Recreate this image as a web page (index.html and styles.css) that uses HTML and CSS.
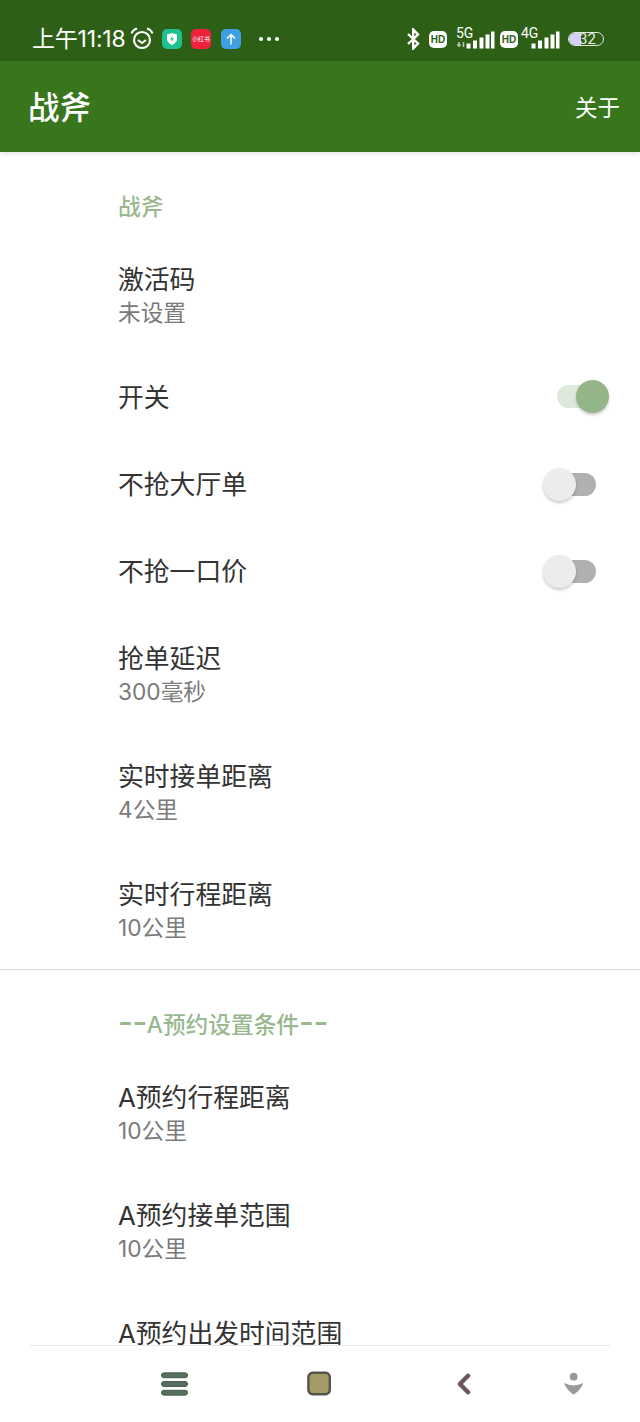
FILE: index.html
```html
<!DOCTYPE html>
<html lang="zh-CN">
<head>
<meta charset="utf-8">
<title>战斧</title>
<link rel="stylesheet" href="styles.css">
</head>
<body>
<div class="phone">
  <header class="top">
    <div class="status">
      <span class="time">上午11:18</span>
      <svg class="alarm" viewBox="0 0 24 24" width="24" height="24"><circle cx="12" cy="13" r="8" fill="none" stroke="#fff" stroke-width="2.2"/><path d="M8 13l4 3 4-3" fill="none" stroke="#fff" stroke-width="2"/><path d="M1.500 6.500Q3 2.500 7 1.500M22.500 6.500Q21 2.500 17 1.500" fill="none" stroke="#fff" stroke-width="2"/></svg>
      <span class="app app-green"><svg viewBox="0 0 20 20" width="20" height="20"><path d="M10 4l5 1.500v4.500q0 3.500-5 6-5-2.500-5-6V5.500z" fill="#fff"/><path d="M10.500 6.500L8 10.500h2l-.5 3 2.500-4h-2z" fill="#1fbf8f"/></svg></span>
      <span class="app app-red">小红书</span>
      <span class="app app-blue"><svg viewBox="0 0 20 20" width="20" height="20"><path d="M10 15.500V6M6 9.500L10 5.500l4 4" fill="none" stroke="#fff" stroke-width="1.500"/></svg></span>
      <span class="dots"><i></i><i></i><i></i></span>
      <span class="status-right">
        <svg class="bt" viewBox="0 0 15 22" width="15" height="22"><path d="M2 6l10 9.500-4.800 5V1.500l4.800 5L2 16" fill="none" stroke="#fff" stroke-width="2.400"/></svg>
        <span class="hd">HD</span>
        <span class="net net-5g">
          <span class="net-label">5G</span>
          <svg viewBox="0 0 39 18" width="39" height="18"><path d="M1 14h4M7.500 11v5M3 11v5" stroke="#b8cdb0" stroke-width="1.500"/><rect x="10.500" y="12.500" width="4" height="5" fill="#fff"/><rect x="17" y="9.500" width="4" height="8" fill="#fff"/><rect x="23.500" y="6.500" width="4" height="11" fill="#fff"/><rect x="29.500" y="3.500" width="4" height="14" fill="#fff"/><rect x="35" y="0.500" width="3.500" height="17" fill="#fff"/></svg>
        </span>
        <span class="hd hd-second">HD</span>
        <span class="net net-4g">
          <span class="net-label">4G</span>
          <svg viewBox="0 0 39 18" width="39" height="18"><rect x="10.500" y="12.500" width="4" height="5" fill="#fff"/><rect x="17" y="9.500" width="4" height="8" fill="#fff"/><rect x="23.500" y="6.500" width="4" height="11" fill="#fff"/><rect x="29.500" y="3.500" width="4" height="14" fill="#fff"/><rect x="35" y="0.500" width="3.500" height="17" fill="#fff"/></svg>
        </span>
        <span class="battery"><span class="battery-fill"></span><span class="battery-num">32</span></span>
      </span>
    </div>
    <div class="appbar">
      <h1 class="appbar-title">战斧</h1>
      <span class="appbar-action">关于</span>
    </div>
  </header>

  <main class="list">
    <section class="group">
      <h2 class="cat">战斧</h2>
      <div class="row row-two"><div class="row-title">激活码</div><div class="row-sub">未设置</div></div>
      <div class="row row-one"><div class="row-title">开关</div><span class="switch switch-on"></span></div>
      <div class="row row-one"><div class="row-title">不抢大厅单</div><span class="switch"></span></div>
      <div class="row row-one"><div class="row-title">不抢一口价</div><span class="switch"></span></div>
      <div class="row row-two"><div class="row-title">抢单延迟</div><div class="row-sub">300毫秒</div></div>
      <div class="row row-two"><div class="row-title">实时接单距离</div><div class="row-sub">4公里</div></div>
      <div class="row row-two"><div class="row-title">实时行程距离</div><div class="row-sub">10公里</div></div>
    </section>
    <section class="group group-next">
      <h2 class="cat"><span class="dash">--</span>A预约设置条件<span class="dash">--</span></h2>
      <div class="row row-two"><div class="row-title">A预约行程距离</div><div class="row-sub">10公里</div></div>
      <div class="row row-two"><div class="row-title">A预约接单范围</div><div class="row-sub">10公里</div></div>
      <div class="row row-one"><div class="row-title">A预约出发时间范围</div></div>
    </section>
  </main>

  <nav class="nav">
    <svg class="nav-menu" viewBox="0 0 30 26" width="30" height="26"><g fill="#56705f" stroke="#46554c" stroke-width="1"><rect x="1.500" y="1.500" width="27" height="5" rx="2.500"/><rect x="1.500" y="10.500" width="27" height="5" rx="2.500"/><rect x="1.500" y="19.500" width="27" height="5" rx="2.500"/></g></svg>
    <svg class="nav-home" viewBox="0 0 26 26" width="25" height="25"><rect x="1.500" y="1.500" width="23" height="23" rx="4.500" fill="#a39b66" stroke="#56544a" stroke-width="2.600"/></svg>
    <svg class="nav-back" viewBox="0 0 16 24" width="16" height="24"><path d="M12.500 3.500L4 12l8.500 8.500" fill="none" stroke="#6a5560" stroke-width="4.600" stroke-linecap="round" stroke-linejoin="round"/></svg>
    <svg class="nav-down" viewBox="0 0 22 24" width="22" height="24"><circle cx="11" cy="4.500" r="4" fill="#999"/><path d="M1 11q5 2.500 10 2.500T21 11q-3 7.500-10 12Q4 18.500 1 11z" fill="#999"/></svg>
  </nav>
</div>
</body>
</html>
```

FILE: styles.css
```css
* { box-sizing: border-box; }
html, body { margin: 0; padding: 0; }
body {
  background: #fff;
  font-family: "Inter", "Noto Sans CJK SC", sans-serif;
  color: #333;
}
.phone {
  width: 640px;
  height: 1422px;
  display: flex;
  flex-direction: column;
  overflow: hidden;
}
.top {
  position: relative;
  z-index: 1;
  box-shadow: 0 2px 5px rgba(90, 130, 70, .18);
}
.status {
  height: 61px;
  background: #2e5f17;
  color: #fff;
  display: flex;
  align-items: center;
  padding: 17px 36px 0 32px;
}
.time { font-size: 23px; line-height: 28px; width: 95px; white-space: nowrap; letter-spacing: -.2px; }
.alarm { margin-left: 3px; margin-top: -1px; }
.app {
  width: 20px;
  height: 20px;
  border-radius: 5px;
  display: flex;
  align-items: center;
  justify-content: center;
  overflow: hidden;
}
.app-green { margin-left: 8px; background: #1fbf8f; }
.app-red {
  margin-left: 9px;
  background: #f0203f;
  color: #fff;
  font-size: 6px;
  line-height: 20px;
  white-space: nowrap;
}
.app-blue { margin-left: 10px; background: #3f9fe0; }
.dots { margin-left: 18px; display: flex; gap: 4px; }
.dots i { width: 4px; height: 4px; border-radius: 50%; background: #fff; display: block; }
.status-right { margin-left: auto; display: flex; align-items: center; }
.bt { display: block; }
.hd {
  margin-left: 8px;
  width: 18px;
  height: 17px;
  border-radius: 5px;
  background: #fff;
  color: #2e5f17;
  font: 700 10px/17px "Liberation Sans", sans-serif;
  text-align: center;
}
.hd-second { margin-left: 5px; }
.net { position: relative; display: block; width: 39px; height: 17px; }
.net-5g { margin-left: 9px; }
.net-4g { margin-left: 3px; }
.net svg { display: block; }
.net-label {
  position: absolute;
  left: 0;
  top: -5px;
  font: 14px/14px "Roboto", sans-serif;
  color: #fff;
}
.battery {
  position: relative;
  margin-left: 8px;
  width: 36px;
  height: 14px;
  border: 1px solid #dfe8da;
  border-radius: 7px;
  display: block;
}
.battery-fill { position: absolute; left: 0; top: 0; bottom: 0; width: 12px; background: #d6d0fa; border-radius: 6px 0 0 6px; }
.battery-num {
  position: absolute;
  left: 10px;
  top: -1px;
  font: 15px/14px "Roboto", sans-serif;
  color: #e6efe2;
}
.appbar {
  height: 91px;
  background: #38761d;
  color: #fff;
  display: flex;
  align-items: center;
  justify-content: space-between;
  padding: 3px 20px 0 28px;
}
.appbar-title { margin: 0; font-size: 31.500px; line-height: 40px; font-weight: 500; }
.appbar-action { font-size: 22.500px; line-height: 30px; }
.list { flex: 1; min-height: 0; overflow: hidden; }
.group-next { border-top: 1px solid #d9d9d9; }
.cat {
  margin: 0;
  padding: 40px 0 14px 118px;
  font-size: 22.700px;
  line-height: 30px;
  font-weight: 500;
  color: #9ab88f;
  white-space: nowrap;
}
.dash { font-size: 32px; line-height: 0; letter-spacing: -.4px; }
.row { padding: 29px 44px 0 118px; }
.row-one { height: 87px; display: flex; justify-content: space-between; align-items: flex-start; }
.row-two { height: 118px; }
.row-title { font-size: 25.800px; line-height: 30px; color: #333; white-space: nowrap; }
.row-sub { font-size: 22.700px; line-height: 35px; color: #7a7a7a; white-space: nowrap; }
.switch {
  position: relative;
  display: block;
  width: 39px;
  height: 23px;
  margin-top: 3px;
  border-radius: 12px;
  background: #b0b0b0;
}
.switch::after {
  content: "";
  position: absolute;
  left: -14px;
  top: -5px;
  width: 33px;
  height: 33px;
  border-radius: 50%;
  background: #ececec;
  box-shadow: 0 2px 3px rgba(0, 0, 0, .2);
}
.switch-on { background: #dfe9db; margin-top: 2px; }
.switch-on::after { left: 19px; top: -5px; background: #93b587; }
.nav {
  position: relative;
  height: 77px;
  flex: none;
  background: #fff;
  display: flex;
  align-items: center;
  padding: 0 56px 0 160px;
}
.nav::before {
  content: "";
  position: absolute;
  left: 30px;
  right: 30px;
  top: 0;
  height: 1px;
  background: #e6e6e6;
}
.nav svg { display: block; }
.nav-home { margin-left: 118px; }
.nav-back { margin-left: 125px; }
.nav-down { margin-left: 91px; }
```
